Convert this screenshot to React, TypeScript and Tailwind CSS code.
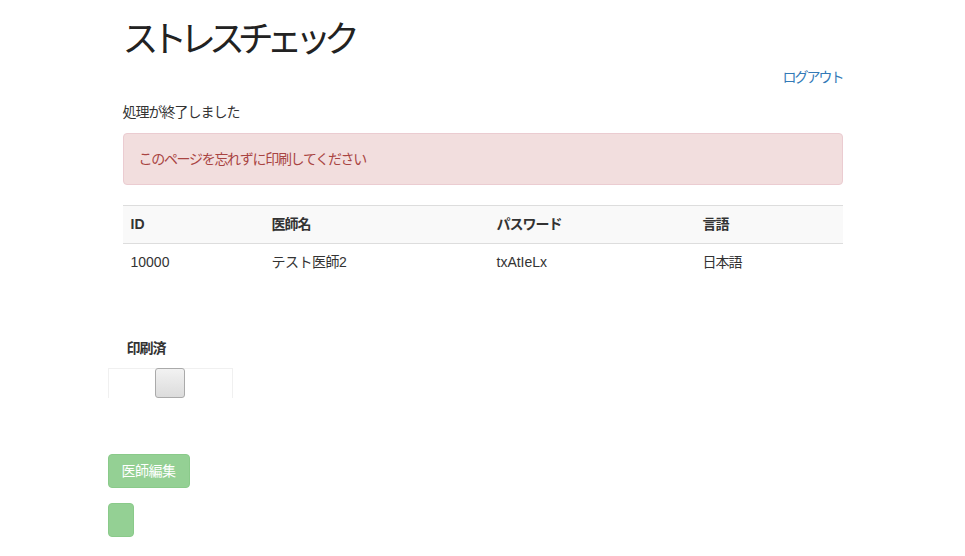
import React from 'react';

const font = { fontFamily: '"Liberation Sans", Arial, "Noto Sans CJK JP", sans-serif' };

const App: React.FC = () => {
  return (
    <div className="min-h-[556px] bg-white text-[14px] leading-[20px] text-[#333]" style={font}>
      <div className="w-[750px] mx-auto px-[15px]">
        <h1 className="mt-5 mb-0 text-[36px] leading-[1.1] font-normal tracking-[-7.2px] text-[#222]">ストレスチェック</h1>

        <div className="mt-[7px] text-right">
          <a className="text-[#337ab7] tracking-[-2px]" href="#">ログアウト</a>
        </div>

        <p className="mt-[15px] mb-[10px] tracking-[-1px]">処理が終了しました</p>

        <div className="mt-[11px] mb-5 p-[15px] border border-[#ebccd1] bg-[#f2dede] text-[#a94442] rounded tracking-[-1.3px]">
          このページを忘れずに印刷してください
        </div>

        <table className="w-full border-collapse mb-5">
          <thead>
            <tr className="bg-[#f9f9f9] border-t border-[#ddd]">
              <th className="text-left font-bold px-2 pt-2 pb-[9px] w-[141px] border-b border-[#ddd]">ID</th>
              <th className="text-left font-bold px-2 pt-2 pb-[9px] w-[225px] border-b border-[#ddd] tracking-[-1px]">医師名</th>
              <th className="text-left font-bold px-2 pt-2 pb-[9px] w-[206px] border-b border-[#ddd] tracking-[-1px]">パスワード</th>
              <th className="text-left font-bold px-2 pt-2 pb-[9px] border-b border-[#ddd] tracking-[-1px]">言語</th>
            </tr>
          </thead>
          <tbody>
            <tr>
              <td className="p-2">10000</td>
              <td className="p-2 tracking-[-0.5px]">テスト医師2</td>
              <td className="p-2">txAtIeLx</td>
              <td className="p-2 tracking-[-1px]">日本語</td>
            </tr>
          </tbody>
        </table>

        <div className="-mx-[15px]">
          <div className="mt-[58px] pl-[19px] font-bold tracking-[-1px]">印刷済</div>
          <div className="mt-[10px] w-[125px] h-[30px] border-t border-x border-[#f0f0f0] flex justify-center">
            <span className="block w-[30px] h-[30px] -mt-px rounded-[3px] border border-[#aaa] bg-gradient-to-b from-[#f2f2f2] to-[#dcdcdc]" />
          </div>

          <div className="mt-[56px]">
            <button className="h-[34px] w-[82px] rounded border border-[#4cae4c] bg-[#5cb85c] text-white opacity-65 tracking-[-0.5px]">医師編集</button>
          </div>
          <div className="mt-[15px]">
            <button className="h-[34px] w-[26px] rounded border border-[#4cae4c] bg-[#5cb85c] text-white opacity-65" />
          </div>
        </div>
      </div>
    </div>
  );
};

export default App;
